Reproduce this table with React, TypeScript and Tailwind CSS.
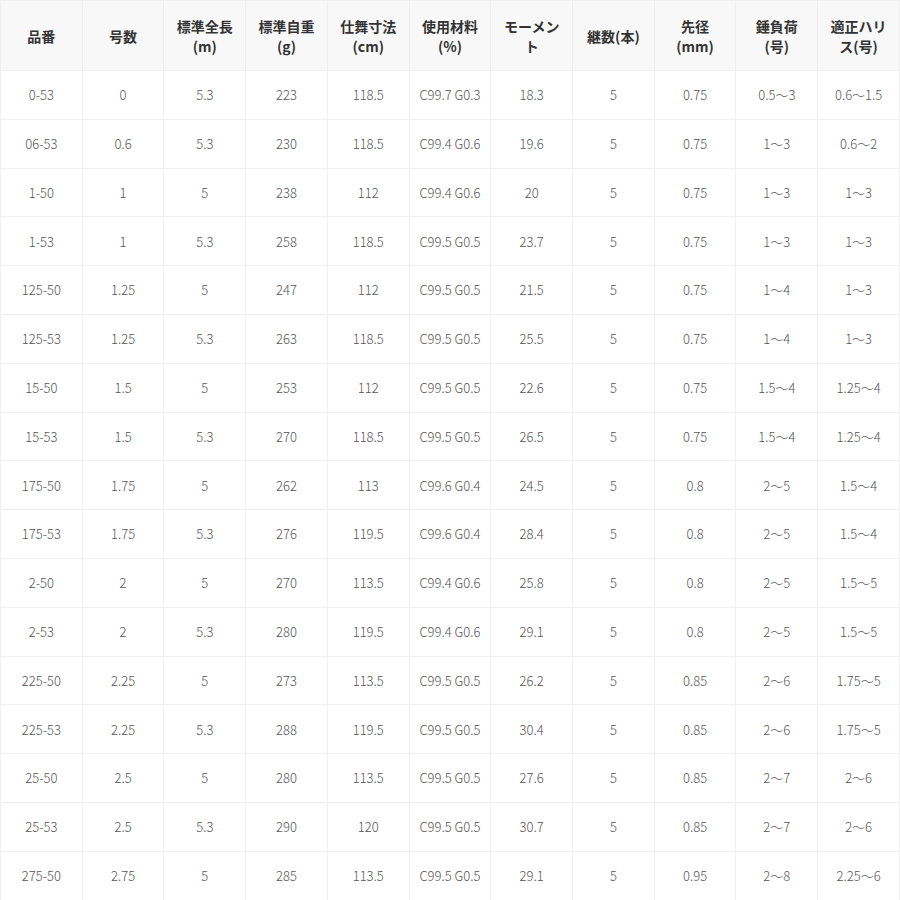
import React from 'react';

const headers: string[][] = [
  ['品番'],
  ['号数'],
  ['標準全長', '(m)'],
  ['標準自重', '(g)'],
  ['仕舞寸法', '(cm)'],
  ['使用材料', '(%)'],
  ['モーメン', 'ト'],
  ['継数(本)'],
  ['先径', '(mm)'],
  ['錘負荷', '(号)'],
  ['適正ハリ', 'ス(号)'],
];

const rows: string[][] = [
  ['0-53', '0', '5.3', '223', '118.5', 'C99.7 G0.3', '18.3', '5', '0.75', '0.5〜3', '0.6〜1.5'],
  ['06-53', '0.6', '5.3', '230', '118.5', 'C99.4 G0.6', '19.6', '5', '0.75', '1〜3', '0.6〜2'],
  ['1-50', '1', '5', '238', '112', 'C99.4 G0.6', '20', '5', '0.75', '1〜3', '1〜3'],
  ['1-53', '1', '5.3', '258', '118.5', 'C99.5 G0.5', '23.7', '5', '0.75', '1〜3', '1〜3'],
  ['125-50', '1.25', '5', '247', '112', 'C99.5 G0.5', '21.5', '5', '0.75', '1〜4', '1〜3'],
  ['125-53', '1.25', '5.3', '263', '118.5', 'C99.5 G0.5', '25.5', '5', '0.75', '1〜4', '1〜3'],
  ['15-50', '1.5', '5', '253', '112', 'C99.5 G0.5', '22.6', '5', '0.75', '1.5〜4', '1.25〜4'],
  ['15-53', '1.5', '5.3', '270', '118.5', 'C99.5 G0.5', '26.5', '5', '0.75', '1.5〜4', '1.25〜4'],
  ['175-50', '1.75', '5', '262', '113', 'C99.6 G0.4', '24.5', '5', '0.8', '2〜5', '1.5〜4'],
  ['175-53', '1.75', '5.3', '276', '119.5', 'C99.6 G0.4', '28.4', '5', '0.8', '2〜5', '1.5〜4'],
  ['2-50', '2', '5', '270', '113.5', 'C99.4 G0.6', '25.8', '5', '0.8', '2〜5', '1.5〜5'],
  ['2-53', '2', '5.3', '280', '119.5', 'C99.4 G0.6', '29.1', '5', '0.8', '2〜5', '1.5〜5'],
  ['225-50', '2.25', '5', '273', '113.5', 'C99.5 G0.5', '26.2', '5', '0.85', '2〜6', '1.75〜5'],
  ['225-53', '2.25', '5.3', '288', '119.5', 'C99.5 G0.5', '30.4', '5', '0.85', '2〜6', '1.75〜5'],
  ['25-50', '2.5', '5', '280', '113.5', 'C99.5 G0.5', '27.6', '5', '0.85', '2〜7', '2〜6'],
  ['25-53', '2.5', '5.3', '290', '120', 'C99.5 G0.5', '30.7', '5', '0.85', '2〜7', '2〜6'],
  ['275-50', '2.75', '5', '285', '113.5', 'C99.5 G0.5', '29.1', '5', '0.95', '2〜8', '2.25〜6'],
];

export default function App() {
  return (
    <div className="w-[900px] h-[900px] overflow-hidden bg-white font-['Noto_Sans_CJK_JP','Noto_Sans',sans-serif]">
      <table className="w-full table-fixed border-collapse">
        <thead>
          <tr className="h-[70px] bg-[#f8f8f8]">
            {headers.map((h, i) => (
              <th
                key={i}
                className="border border-[#efefef] px-1 text-center align-middle text-[14px] leading-[20px] font-bold text-[#333]"
              >
                {h.map((line, j) => (
                  <div key={j}>{line}</div>
                ))}
              </th>
            ))}
          </tr>
        </thead>
        <tbody>
          {rows.map((r, i) => (
            <tr key={i} className="h-[48.8px]">
              {r.map((c, j) => (
                <td
                  key={j}
                  className="border border-[#efefef] text-center align-middle text-[13px] font-light text-[#555] whitespace-nowrap"
                >
                  {c}
                </td>
              ))}
            </tr>
          ))}
        </tbody>
      </table>
    </div>
  );
}
